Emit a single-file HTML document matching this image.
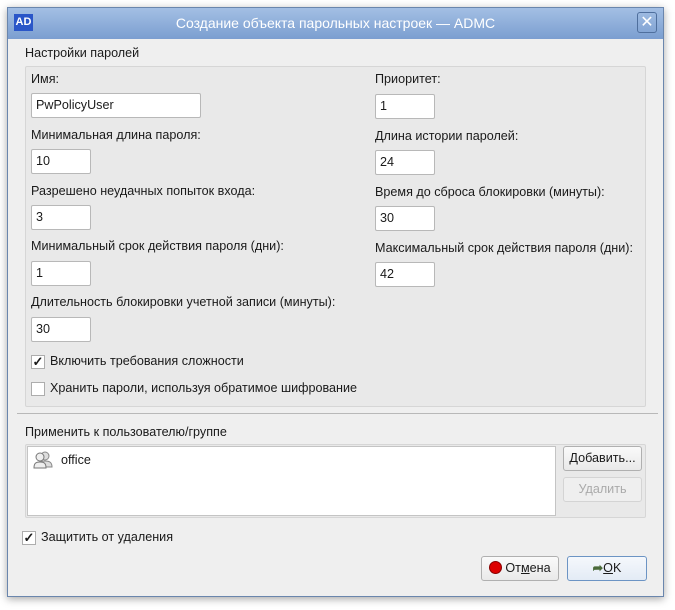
<!DOCTYPE html>
<html><head><meta charset="utf-8"><style>
*{box-sizing:border-box}
body{margin:0;width:675px;height:610px;background:#fff;font-family:"Liberation Sans",sans-serif;font-size:12.6px;color:#1a1a1a;position:relative;overflow:hidden}
.win{position:absolute;left:7px;top:7px;width:657px;height:590px;background:#efefef;border:1px solid #6a86ad;box-shadow:0 2px 8px rgba(0,0,0,.35)}
.title{position:absolute;left:0;top:0;right:0;height:31px;background:linear-gradient(#a3bfe4,#7b9ed0);color:#fff;font-size:14px;text-align:center;line-height:30px}
.ad{position:absolute;left:6px;top:6px;width:19px;height:17px;background:#2a56c8;color:#fff;font-weight:bold;font-size:11px;line-height:17px;text-align:center}
.x{position:absolute;right:6px;top:4px;width:20px;height:21px;border:1px solid #4f6f9d;border-radius:3px;color:#fff;font-size:16px;line-height:19px;text-align:center}
.a{position:absolute;white-space:nowrap}
.in{position:absolute;background:#fff;border:1px solid #b8b8b8;border-radius:2px;padding-left:4px;line-height:22px}
.grp{position:absolute;background:#e9e9e9;border:1px solid #d6d6d6;border-radius:2px}
.cb{position:absolute;width:14px;height:14px;background:#fff;border:1px solid #adadad;font-size:13px;font-weight:bold;line-height:12px;text-align:center}
.btn{position:absolute;background:linear-gradient(#fafafa,#e9e9e9);border:1px solid #b0b0b0;border-radius:3px;text-align:center;line-height:22px}
</style></head><body>
<div class="win">
<div class="title"><div class="ad">AD</div>Создание объекта парольных настроек — ADMC<div class="x">✕</div></div>
</div>
<div class="a" style="left:25px;top:46px">Настройки паролей</div>
<div class="grp" style="left:25px;top:66px;width:621px;height:341px"></div>
<div class="a" style="left:31px;top:72px">Имя:</div>
<div class="in" style="left:31px;top:93px;width:170px;height:25px">PwPolicyUser</div>
<div class="a" style="left:31px;top:128px">Минимальная длина пароля:</div>
<div class="in" style="left:31px;top:149px;width:60px;height:25px">10</div>
<div class="a" style="left:31px;top:184px">Разрешено неудачных попыток входа:</div>
<div class="in" style="left:31px;top:205px;width:60px;height:25px">3</div>
<div class="a" style="left:31px;top:239px">Минимальный срок действия пароля (дни):</div>
<div class="in" style="left:31px;top:261px;width:60px;height:25px">1</div>
<div class="a" style="left:31px;top:295px">Длительность блокировки учетной записи (минуты):</div>
<div class="in" style="left:31px;top:317px;width:60px;height:25px">30</div>
<div class="a" style="left:375px;top:72px">Приоритет:</div>
<div class="in" style="left:375px;top:94px;width:60px;height:25px">1</div>
<div class="a" style="left:375px;top:129px">Длина истории паролей:</div>
<div class="in" style="left:375px;top:150px;width:60px;height:25px">24</div>
<div class="a" style="left:375px;top:185px">Время до сброса блокировки (минуты):</div>
<div class="in" style="left:375px;top:206px;width:60px;height:25px">30</div>
<div class="a" style="left:375px;top:241px">Максимальный срок действия пароля (дни):</div>
<div class="in" style="left:375px;top:262px;width:60px;height:25px">42</div>
<div class="cb" style="left:31px;top:355px">✓</div>
<div class="a" style="left:50px;top:354px">Включить требования сложности</div>
<div class="cb" style="left:31px;top:382px"></div>
<div class="a" style="left:50px;top:381px">Хранить пароли, используя обратимое шифрование</div>
<div style="position:absolute;left:17px;top:413px;width:641px;height:1px;background:#b8b8b8"></div>
<div class="a" style="left:25px;top:425px">Применить к пользователю/группе</div>
<div class="grp" style="left:25px;top:444px;width:621px;height:74px"></div>
<div style="position:absolute;left:27px;top:446px;width:529px;height:70px;background:#fff;border:1px solid #c4c4c4"></div>
<svg style="position:absolute;left:33px;top:451px" width="20" height="18" viewBox="0 0 20 18"><circle cx="12" cy="5" r="4" fill="#ddd" stroke="#888"/><path d="M5 16c0-5 3-6 7-6s7 1 7 6z" fill="#ddd" stroke="#888"/><circle cx="7" cy="6" r="4" fill="#eee" stroke="#777"/><path d="M1 17c0-5 2-6 6-6s6 1 6 6z" fill="#eee" stroke="#777"/></svg>
<div class="a" style="left:61px;top:453px">office</div>
<div class="btn" style="left:563px;top:446px;width:79px;height:25px">Добавить...</div>
<div class="btn" style="left:563px;top:477px;width:79px;height:25px;color:#aaa;background:#efefef;border-color:#d4d4d4">Удалить</div>
<div class="cb" style="left:22px;top:531px">✓</div>
<div class="a" style="left:41px;top:530px">Защитить от удаления</div>
<div class="btn" style="left:481px;top:556px;width:78px;height:25px"><span style="display:inline-block;width:13px;height:13px;border-radius:50%;background:#d00;border:1px solid #800;vertical-align:-2px;margin-right:3px"></span>От<u>м</u>ена</div>
<div class="btn" style="left:567px;top:556px;width:80px;height:25px;border-color:#6c94c4;background:linear-gradient(#f5f8fc,#e3ebf5)"><span style="color:#4a6a3a;font-weight:bold">➦</span><u>O</u>K</div>
</body></html>
